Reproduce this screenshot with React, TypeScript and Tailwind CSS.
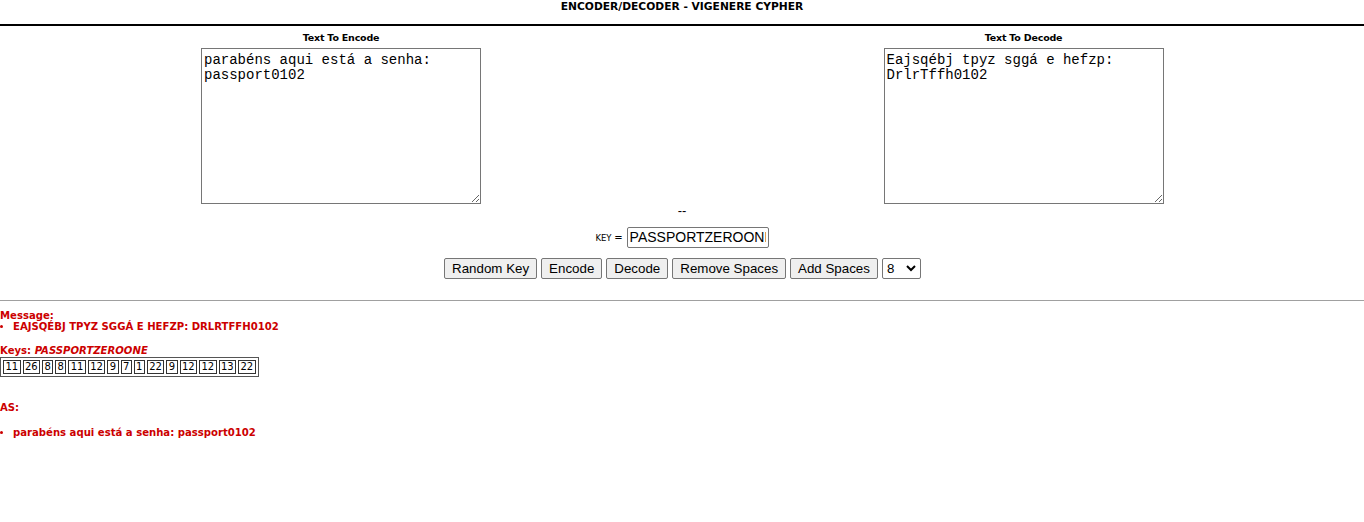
import React from "react";

const keys = [11, 26, 8, 8, 11, 12, 9, 7, 1, 22, 9, 12, 12, 13, 22];

export default function App() {
  const v = { fontFamily: '"DejaVu Sans", Verdana, sans-serif' };
  const btn =
    "h-[21px] px-[7px] bg-[#efefef] border border-[#767676] rounded-[2px] text-[13.33px] leading-[17px] text-black";
  const ta =
    "w-[280px] h-[156px] border border-[#767676] px-[2px] pt-[4px] text-[14px] leading-[15px] resize-y text-black";
  return (
    <div className="w-[1364px] h-[522px] bg-white text-black" style={v}>
      <div className="h-[24px] flex justify-center text-[10.7px] leading-[14px] font-bold">
        ENCODER/DECODER - VIGENERE CYPHER
      </div>
      <div className="h-[2px] bg-black" />
      <div className="grid grid-cols-2 pt-[5px]">
        <div className="flex flex-col items-center">
          <div className="text-[9.5px] font-bold h-[17px] leading-[14px] tracking-[-0.2px]">Text To Encode</div>
          <textarea
            className={ta}
            style={{ fontFamily: '"Liberation Mono", monospace' }}
            defaultValue={"parabéns aqui está a senha:\npassport0102"}
            spellCheck={false}
          />
        </div>
        <div className="flex flex-col items-center pl-[1px]">
          <div className="text-[9.5px] font-bold h-[17px] leading-[14px] tracking-[-0.2px]">Text To Decode</div>
          <textarea
            className={ta}
            style={{ fontFamily: '"Liberation Mono", monospace' }}
            defaultValue={"Eajsqébj tpyz sggá e hefzp:\nDrlrTffh0102"}
            spellCheck={false}
          />
        </div>
      </div>
      <div className="flex justify-center text-[13px] leading-[14px]" style={{ fontFamily: '"Liberation Sans", Arial, sans-serif' }}>--</div>
      <div className="flex justify-center items-center mt-[9px] gap-[4px]">
        <span className="text-[8.5px]">
          KEY <span className="text-[10px]">=</span>
        </span>
        <input
          className="w-[142px] h-[21px] border border-[#767676] rounded-[2px] px-[2px] text-[14px] text-black"
          style={{ fontFamily: '"Liberation Sans", Arial, sans-serif' }}
          defaultValue="PASSPORTZEROONE"
        />
      </div>
      <div
        className="flex justify-center items-center mt-[10px] gap-[4px] pl-[1px]"
        style={{ fontFamily: '"Liberation Sans", Arial, sans-serif' }}
      >
        <button className={btn}>Random Key</button>
        <button className={btn}>Encode</button>
        <button className={btn}>Decode</button>
        <button className={btn}>Remove Spaces</button>
        <button className={btn}>Add Spaces</button>
        <div className="relative w-[39px] h-[21px] border border-[#767676] rounded-[2px] bg-white text-[13.33px] flex items-center pl-[4px]">
          8
          <svg className="absolute right-[4px] top-[6px]" width="10" height="7" viewBox="0 0 10 7">
            <path d="M1 1 L5 5 L9 1" stroke="black" strokeWidth="2" fill="none" />
          </svg>
        </div>
      </div>
      <div className="mt-[21px] h-[1px] bg-[#a0a0a0] border-t border-[#a0a0a0]" />
      <div className="text-[#cc0000] font-bold text-[10.1px] leading-[11px] pt-[9px]">
        <div>Message:</div>
        <ul className="list-disc pl-[13px]">
          <li>EAJSQÉBJ TPYZ SGGÁ E HEFZP: DRLRTFFH0102</li>
        </ul>
        <div className="mt-[13px]">
          Keys: <span className="italic">PASSPORTZEROONE</span>
        </div>
        <table className="mt-[1px] border border-[#555] border-separate border-spacing-[2px] text-black font-normal text-[10px]">
          <tbody>
            <tr>
              {keys.map((k, i) => (
                <td key={i} className="border border-[#333] px-[1.4px] leading-[12px] text-center">
                  {k}
                </td>
              ))}
            </tr>
          </tbody>
        </table>
        <div className="mt-[25px]">AS:</div>
        <ul className="list-disc pl-[13px] mt-[14px]">
          <li>parabéns aqui está a senha: passport0102</li>
        </ul>
      </div>
    </div>
  );
}
